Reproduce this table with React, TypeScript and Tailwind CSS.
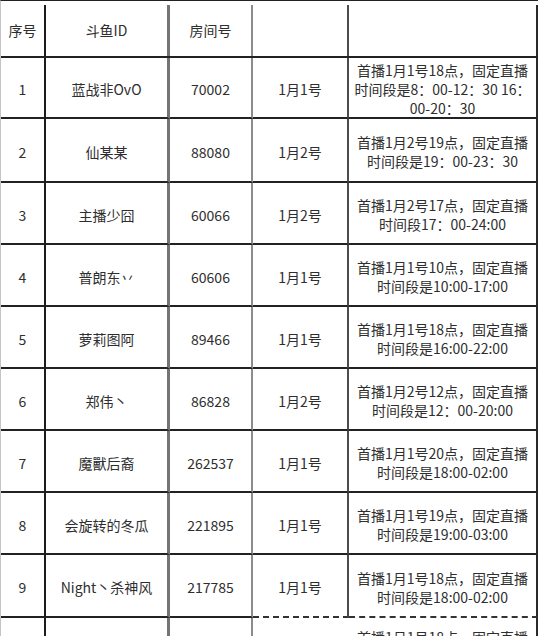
import React from "react";

type Row = {
  no: string;
  id: string;
  room: string;
  date: string;
  lines: string[];
  h: string;
};

const rows: Row[] = [
  { no: "1", id: "蓝战非OvO", room: "70002", date: "1月1号", lines: ["首播1月1号18点，固定直播", "时间段是8：00-12：30 16：", "00-20：30"], h: "h-[61px]" },
  { no: "2", id: "仙某某", room: "88080", date: "1月2号", lines: ["首播1月2号19点，固定直播", "时间段是19：00-23：30"], h: "h-[64px]" },
  { no: "3", id: "主播少囧", room: "60066", date: "1月2号", lines: ["首播1月2号17点，固定直播", "时间段17：00-24:00"], h: "h-[62px]" },
  { no: "4", id: "普朗东丷", room: "60606", date: "1月1号", lines: ["首播1月1号10点，固定直播", "时间段是10:00-17:00"], h: "h-[62px]" },
  { no: "5", id: "萝莉图阿", room: "89466", date: "1月1号", lines: ["首播1月1号18点，固定直播", "时间段是16:00-22:00"], h: "h-[62px]" },
  { no: "6", id: "郑伟丶", room: "86828", date: "1月2号", lines: ["首播1月2号12点，固定直播", "时间段是12：00-20:00"], h: "h-[62px]" },
  { no: "7", id: "魔獸后裔", room: "262537", date: "1月1号", lines: ["首播1月1号20点，固定直播", "时间段是18:00-02:00"], h: "h-[62px]" },
  { no: "8", id: "会旋转的冬瓜", room: "221895", date: "1月1号", lines: ["首播1月1号19点，固定直播", "时间段是19:00-03:00"], h: "h-[62px]" },
  { no: "9", id: "Night丶杀神风", room: "217785", date: "1月1号", lines: ["首播1月1号18点，固定直播", "时间段是18:00-02:00"], h: "h-[63px]" },
];

const c1 = "w-[45px] shrink-0 border-r-2 border-r-[#1c1c1c] flex items-center justify-center";
const c2 = "w-[124px] shrink-0 border-r-[3px] border-r-[#747474] flex items-center justify-center";
const c3 = "w-[83px] shrink-0 border-r-2 border-r-[#8c8c8c] flex items-center justify-center";
const c4 = "w-[96px] shrink-0 border-r-2 border-r-[#4c4c4c] flex items-center justify-center";
const c5 = "w-[189px] shrink-0 border-r-2 border-r-[#2a2a2a] flex flex-col items-center justify-center";

export default function App() {
  return (
    <div className="w-[540px] h-[636px] overflow-hidden bg-white text-[#2e2e2e] text-[14px] leading-[19px] font-['Noto_Sans_CJK_SC',sans-serif]">
      <div className="w-[538px] border-l border-l-[#c4c4c4] border-t border-t-[#222]">
        {/* header */}
        <div className="flex h-[57px] border-b-2 border-b-[#222] pt-[4px]">
          <div className={c1}>序号</div>
          <div className={c2}>斗鱼ID</div>
          <div className={c3}>房间号</div>
          <div className={c4}></div>
          <div className={c5}></div>
        </div>
        {rows.map((r, i) => {
          const last = i === rows.length - 1;
          return (
            <div key={r.no} className={`flex ${r.h}`}>
              <div className={`${c1} pt-[4px] border-b-2 border-b-[#222]`}>{r.no}</div>
              <div className={`${c2} pt-[4px] border-b-2 border-b-[#222] whitespace-nowrap`}>{r.id}</div>
              <div className={`${c3} pt-[4px] border-b-2 border-b-[#222]`}>{r.room}</div>
              <div className={`${c4} pt-[4px] border-b-2 ${last ? "[border-bottom-style:dashed] border-b-[#333]" : "border-b-[#222]"}`}>{r.date}</div>
              <div className={`${c5} pt-[4px] border-b-2 ${last ? "[border-bottom-style:dashed] border-b-[#333]" : "border-b-[#222]"}`}>
                {r.lines.map((l) => (
                  <div key={l} className="whitespace-nowrap">{l}</div>
                ))}
              </div>
            </div>
          );
        })}
        {/* partial last row */}
        <div className="flex h-[40px]">
          <div className="w-[45px] shrink-0 border-r-2 border-r-[#1c1c1c]"></div>
          <div className="w-[124px] shrink-0 border-r-[3px] border-r-[#747474]"></div>
          <div className="w-[83px] shrink-0 border-r-2 border-r-[#8c8c8c]"></div>
          <div className="w-[96px] shrink-0 border-r-2 border-r-white"></div>
          <div className="w-[189px] shrink-0 border-r-2 border-r-[#2a2a2a] flex justify-center pt-[10px] whitespace-nowrap">首播1月1号18点，固定直播</div>
        </div>
      </div>
    </div>
  );
}
